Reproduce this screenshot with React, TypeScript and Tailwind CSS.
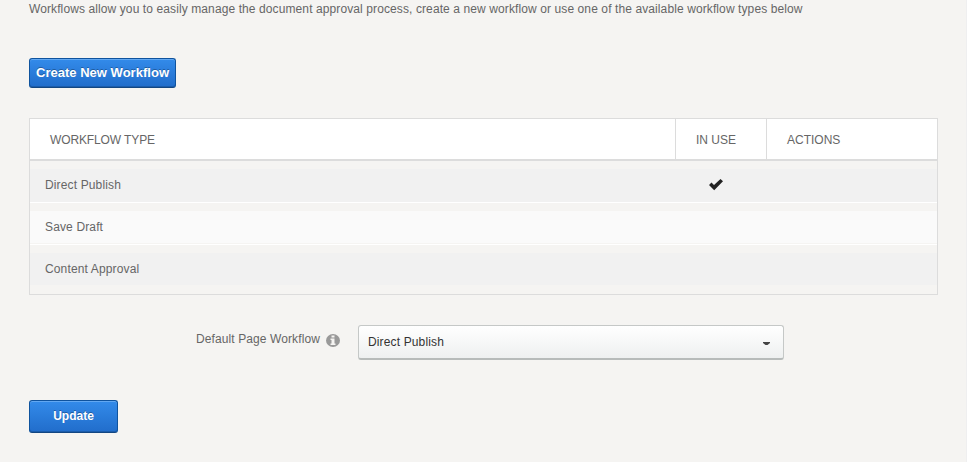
import React from "react";

const workflows = [
  { name: "Direct Publish", inUse: true, row: "h-[42px] border-b border-white pt-2", fill: "bg-[#f1f1f1] h-[33px]" },
  { name: "Save Draft", inUse: false, row: "h-[42px] border-b border-white pt-2", fill: "bg-[#fafafa] h-8" },
  { name: "Content Approval", inUse: false, row: "h-[49px] pt-2", fill: "bg-[#f1f1f1] h-8" },
];

function BlueButton({ label, size }: { label: string; size: string }) {
  return (
    <button
      className={`flex justify-center whitespace-nowrap rounded-[3px] border border-[#0f539e] border-b-[#124682] bg-linear-to-b from-[#338bea] to-[#216dcb] font-bold text-white shadow-[inset_0_1px_0_#62a8f2,inset_0_-1px_0_#1b5cab] [text-shadow:0_-1px_0_rgba(0,0,0,0.3)] ${size}`}
    >
      {label}
    </button>
  );
}

export default function App() {
  return (
    <div className="h-[462px] w-[967px] overflow-hidden border-r border-[#efeff0] bg-[#f5f4f2] pl-[29px] font-['Liberation_Sans',Arial,sans-serif] text-xs text-[#666]">
      <p className="mt-px h-[57px] whitespace-nowrap leading-4 tracking-[0.102px]">
        Workflows allow you to easily manage the document approval process, create a new workflow or use one of the
        available workflow types below
      </p>
      <BlueButton label="Create New Workflow" size="h-[30px] w-[147px] text-[13px] leading-7 tracking-[0.02px]" />

      <div className="mt-[30px] h-[177px] w-[909px] border border-[#dcdcdc]">
        <div className="flex h-[42px] border-b-2 border-[#dcdcdc] bg-white leading-[42px]">
          <div className="w-[646px] border-r border-[#dcdcdc] pl-5 tracking-[-0.12px]">WORKFLOW TYPE</div>
          <div className="w-[91px] border-r border-[#dcdcdc] pl-5">IN USE</div>
          <div className="pl-5">ACTIONS</div>
        </div>
        {workflows.map((w) => (
          <div key={w.name} className={w.row}>
            <div className={`flex leading-8 tracking-[0.14px] ${w.fill}`}>
              <div className="w-[679px] pl-[15px]">{w.name}</div>
              {w.inUse && (
                <svg className="mt-[10px] h-3 w-[14px]" viewBox="0 0 14 12">
                  <path d="M0 6 L2.5 3.6 L5 6 L11.5 0 L14 2.3 L5.2 11.2Z" fill="#222" />
                </svg>
              )}
            </div>
          </div>
        ))}
      </div>

      <div className="mt-[30px] flex h-[35px]">
        <span className="ml-[167px] w-[130px] whitespace-nowrap leading-7 tracking-[0.1px]">Default Page Workflow</span>
        <svg className="mt-[9px] h-[13px] w-[14px]" viewBox="0 0 14 13">
          <ellipse cx="7" cy="6.5" rx="7" ry="6.5" fill="#999" />
          <path d="M5.5 1.5h3v2h-3zM4.5 4.5h4v5h1v1.5h-5V9.500h1V6h-1z" fill="#f5f4f2" />
        </svg>
        <div className="ml-[18px] flex h-[35px] w-[426px] justify-between rounded-[3px] border border-[#c5c8c7] border-b-2 border-b-[#b7bbba] bg-linear-to-b from-white to-[#eef0f0] pl-[9px] pr-[13px] leading-8 tracking-[0.14px] text-[#333]">
          Direct Publish
          <svg className="mt-4 h-[4px] w-[7px]" viewBox="0 0 7 4">
            <path d="M0 0h7v1L4.500 3h-2L0 1z" fill="#444" />
          </svg>
        </div>
      </div>

      <div className="mt-10">
        <BlueButton label="Update" size="h-[33px] w-[89px] text-xs leading-[30px]" />
      </div>
    </div>
  );
}
